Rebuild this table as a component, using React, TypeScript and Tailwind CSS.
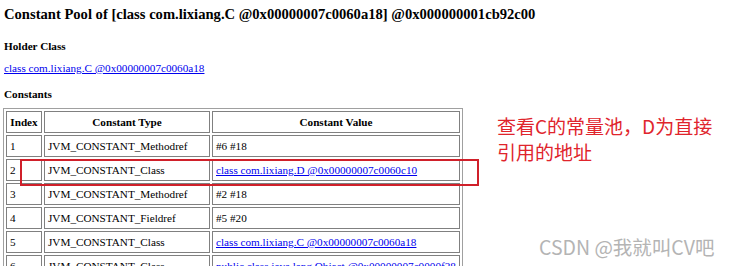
import React from "react";

interface iRow {
	index: string;
	type: string;
	value: string;
	link?: boolean;
}

const rows: iRow[] = [
	{index: "1", type: "JVM_CONSTANT_Methodref", value: "#6 #18"},
	{index: "2", type: "JVM_CONSTANT_Class", value: "class com.lixiang.D @0x00000007c0060c10", link: true},
	{index: "3", type: "JVM_CONSTANT_Methodref", value: "#2 #18"},
	{index: "4", type: "JVM_CONSTANT_Fieldref", value: "#5 #20"},
	{index: "5", type: "JVM_CONSTANT_Class", value: "class com.lixiang.C @0x00000007c0060a18", link: true},
	{index: "6", type: "JVM_CONSTANT_Class", value: "public class java.lang.Object @0x00000007c0000f28", link: true},
];

const App: React.FC = () => {
	return (
		<div className="relative w-[730px] h-[266px] overflow-hidden bg-white text-black font-['Liberation_Serif',serif]">
			<div className="flex">
				{/* page content */}
				<div className="w-[480px] shrink-0 pl-[4px] pt-[4px]">
					<h2 className="text-[14.6px] font-bold leading-[20px] whitespace-nowrap">
						Constant Pool of [class com.lixiang.C @0x00000007c0060a18] @0x000000001cb92c00
					</h2>
					<p className="mt-[15px] text-[11.2px] font-bold leading-[14px]">Holder Class</p>
					<p className="mt-[8px] text-[11.2px] leading-[14px]">
						<a className="text-[#0000ee] underline">class com.lixiang.C @0x00000007c0060a18</a>
					</p>
					<p className="mt-[12px] text-[11.2px] font-bold leading-[14px]">Constants</p>
					<table className="mt-[7px] -ml-[1px] w-[458px] table-fixed border-separate border-spacing-[2px] border border-[#a0a0a0] text-[11.2px] leading-[14px]">
						<colgroup>
							<col className="w-[36px]" />
							<col className="w-[166px]" />
							<col className="w-[248px]" />
						</colgroup>
						<thead>
							<tr className="h-[22px]">
								<th className="border border-[#808080] px-[3px] text-center font-bold">Index</th>
								<th className="border border-[#808080] px-[3px] text-center font-bold">Constant Type</th>
								<th className="border border-[#808080] px-[3px] text-center font-bold">Constant Value</th>
							</tr>
						</thead>
						<tbody>
							{rows.map((row) => (
								<tr key={row.index} className="h-[22px]">
									<td className="border border-[#808080] px-[3px]">{row.index}</td>
									<td className="border border-[#808080] px-[3px] whitespace-nowrap">{row.type}</td>
									<td className="border border-[#808080] px-[3px] whitespace-nowrap overflow-hidden">
										{row.link ? (
											<a className="text-[#0000ee] underline">{row.value}</a>
										) : (
											row.value
										)}
									</td>
								</tr>
							))}
						</tbody>
					</table>
				</div>

				{/* annotation */}
				<div className="pl-[17px] pt-[113px] text-[19px] leading-[26px] text-[#e0242c] font-['Noto_Sans_CJK_SC',sans-serif]">
					<p>查看C的常量池，D为直接</p>
					<p>引用的地址</p>
				</div>
			</div>

			{/* highlight box */}
			<div className="absolute left-[20px] top-[159px] w-[459px] h-[27px] border-2 border-[#d0202a]" />

			{/* watermark */}
			<div className="absolute left-[539px] top-[235px] text-[19.5px] leading-[24px] text-[#b4b4b4] whitespace-nowrap font-['Noto_Sans_CJK_SC',sans-serif]">
				CSDN @我就叫CV吧
			</div>
		</div>
	);
};

export default App;
